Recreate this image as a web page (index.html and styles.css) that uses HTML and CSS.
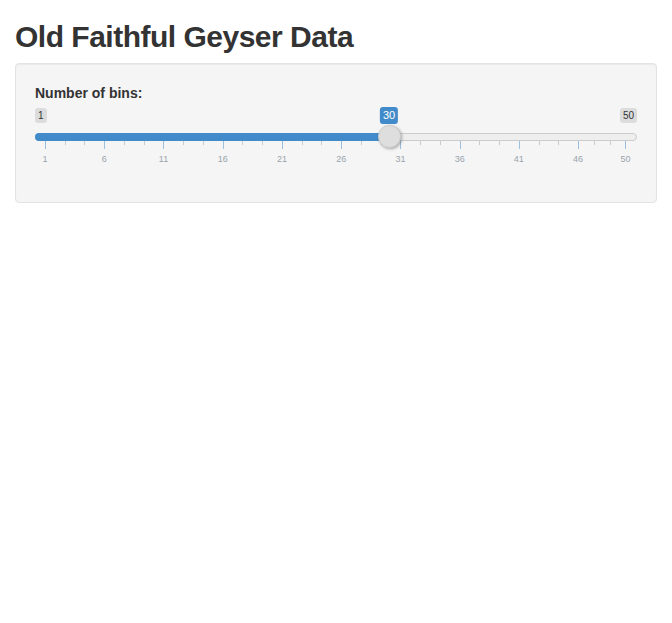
FILE: index.html
```html
<!DOCTYPE html>
<html>
<head>
<meta charset="utf-8">
<title>Old Faithful Geyser Data</title>
<link rel="stylesheet" href="styles.css">
</head>
<body>
<div class="container">
  <h2 class="title">Old Faithful Geyser Data</h2>
  <div class="well">
    <div class="form-group">
      <label class="control-label">Number of bins:</label>
      <div class="irs">
        <div class="irs-labels">
          <span class="irs-min">1</span>
          <span class="irs-max">50</span>
        </div>
        <div class="irs-line">
          <div class="irs-bar" style="width: 354px"></div>
        </div>
        <div class="irs-grid">
          <div class="grid-inner">
            <span class="pol" style="left:0%"></span>
            <span class="gt" style="left:0%">1</span>
            <span class="pol small" style="left:3.4014%"></span>
            <span class="pol small" style="left:6.8027%"></span>
            <span class="pol" style="left:10.2041%"></span>
            <span class="gt" style="left:10.2041%">6</span>
            <span class="pol small" style="left:13.6054%"></span>
            <span class="pol small" style="left:17.0068%"></span>
            <span class="pol" style="left:20.4082%"></span>
            <span class="gt" style="left:20.4082%">11</span>
            <span class="pol small" style="left:23.8095%"></span>
            <span class="pol small" style="left:27.2109%"></span>
            <span class="pol" style="left:30.6122%"></span>
            <span class="gt" style="left:30.6122%">16</span>
            <span class="pol small" style="left:34.0136%"></span>
            <span class="pol small" style="left:37.4150%"></span>
            <span class="pol" style="left:40.8163%"></span>
            <span class="gt" style="left:40.8163%">21</span>
            <span class="pol small" style="left:44.2177%"></span>
            <span class="pol small" style="left:47.6190%"></span>
            <span class="pol" style="left:51.0204%"></span>
            <span class="gt" style="left:51.0204%">26</span>
            <span class="pol small" style="left:54.4218%"></span>
            <span class="pol small" style="left:57.8231%"></span>
            <span class="pol" style="left:61.2245%"></span>
            <span class="gt" style="left:61.2245%">31</span>
            <span class="pol small" style="left:64.6259%"></span>
            <span class="pol small" style="left:68.0272%"></span>
            <span class="pol" style="left:71.4286%"></span>
            <span class="gt" style="left:71.4286%">36</span>
            <span class="pol small" style="left:74.8299%"></span>
            <span class="pol small" style="left:78.2313%"></span>
            <span class="pol" style="left:81.6327%"></span>
            <span class="gt" style="left:81.6327%">41</span>
            <span class="pol small" style="left:85.0340%"></span>
            <span class="pol small" style="left:88.4354%"></span>
            <span class="pol" style="left:91.8367%"></span>
            <span class="gt" style="left:91.8367%">46</span>
            <span class="pol small" style="left:94.5578%"></span>
            <span class="pol small" style="left:97.2789%"></span>
            <span class="pol" style="left:99.9%"></span>
            <span class="gt" style="left:100%">50</span>
          </div>
        </div>
        <span class="irs-single" style="left: 354px">30</span>
        <span class="irs-slider" style="left: 342.5px"></span>
      </div>
    </div>
  </div>
</div>
</body>
</html>
```
FILE: styles.css
```css
html, body {
  margin: 0;
  padding: 0;
  background: #fff;
}
body {
  font-family: "Liberation Sans", Arial, sans-serif;
  font-size: 14px;
  line-height: 1.42857;
  color: #333;
}
.container {
  padding: 0 15px;
}
.title {
  margin: 20px 0 10px;
  font-size: 30px;
  line-height: 1.1;
  font-weight: bold;
  letter-spacing: -0.5px;
  color: #333;
}
.well {
  min-height: 20px;
  padding: 19px;
  margin-bottom: 20px;
  background: #f5f5f5;
  border: 1px solid #e3e3e3;
  border-radius: 4px;
  box-shadow: inset 0 1px 1px rgba(0,0,0,0.05);
}
.form-group {
  margin-bottom: 15px;
}
.control-label {
  display: inline-block;
  margin-bottom: 5px;
  padding-top: 1px;
  font-weight: bold;
}
.irs {
  position: relative;
  height: 60px;
  font-family: "Liberation Sans", Arial, sans-serif;
}
.irs-labels {
  display: flex;
  justify-content: space-between;
  align-items: flex-start;
  height: 17px;
  margin-top: -1px;
  margin-bottom: 1px;
}
.irs-min, .irs-max {
  color: #333;
  font-size: 10px;
  line-height: 1.333;
  padding: 1px 3px;
  background: rgba(0,0,0,0.1);
  border-radius: 3px;
}
.irs-line {
  height: 8px;
  margin-top: 8px;
  box-sizing: border-box;
  background: #eee;
  border: 1px solid #ccc;
  border-radius: 16px;
  position: relative;
}
.irs-bar {
  position: absolute;
  left: -1px;
  top: -1px;
  height: 8px;
  background: #428bca;
  border-radius: 16px 0 0 16px;
}
.irs-grid {
  height: 27px;
  position: relative;
  padding: 0 11.5px 0 10px;
}
.grid-inner {
  position: relative;
  height: 100%;
}
.pol {
  position: absolute;
  top: 0;
  width: 1px;
  height: 8px;
  background: #428bca;
  opacity: 0.5;
}
.pol.small {
  height: 4px;
  background: #99a4ac;
}
.gt {
  position: absolute;
  bottom: 4px;
  transform: translateX(-50%);
  font-size: 9px;
  line-height: 9px;
  padding: 0 3px;
  color: #99a4ac;
  white-space: nowrap;
}
.irs-single {
  position: absolute;
  top: -1px;
  transform: translateX(-50%);
  color: #fff;
  font-size: 11px;
  line-height: 1.333;
  padding: 1px 3px;
  background: #428bca;
  border-radius: 3px;
}
.irs-slider {
  position: absolute;
  top: 17px;
  width: 21px;
  height: 21px;
  border-radius: 27px;
  background: #dedede;
  border: 1px solid #ccc;
  box-shadow: 1px 1px 3px rgba(0,0,0,0.3);
}
```
